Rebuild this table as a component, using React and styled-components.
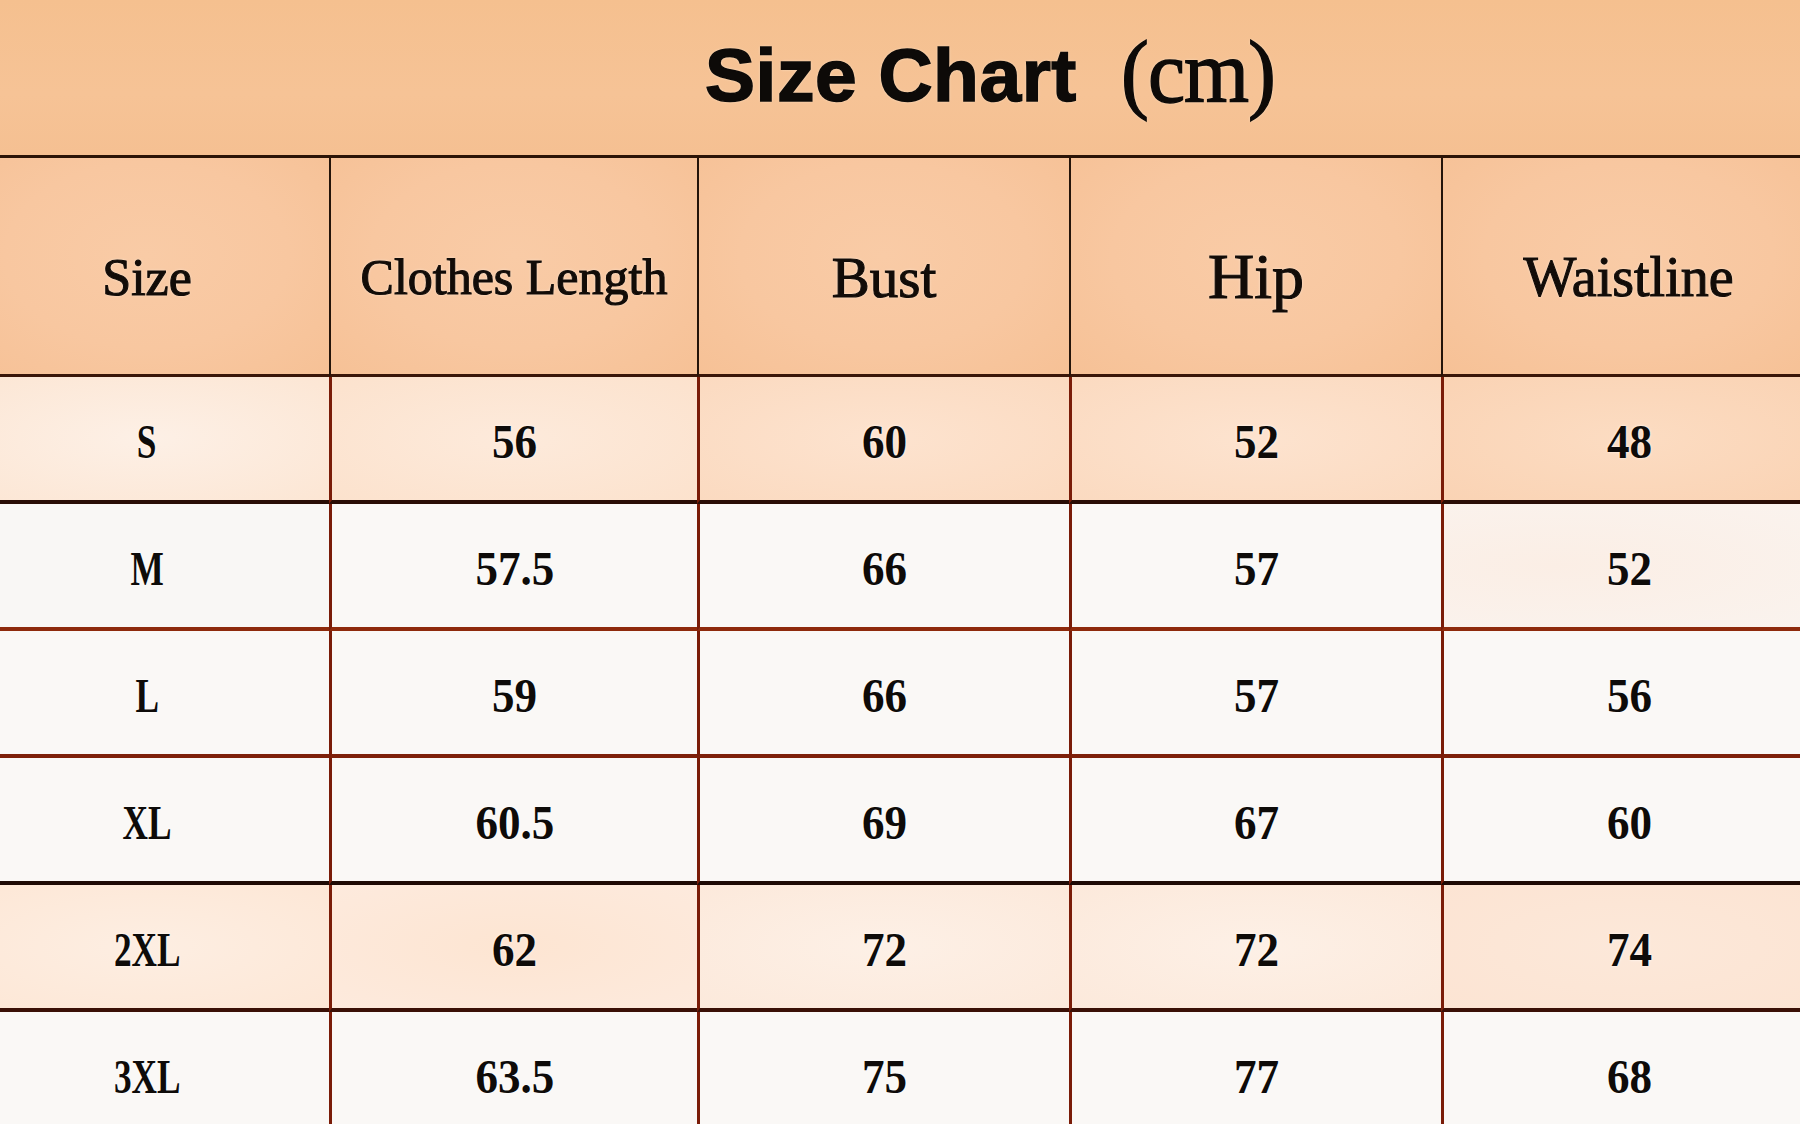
import styled, { createGlobalStyle } from "styled-components";

const GlobalStyle = createGlobalStyle`
  html, body {
    margin: 0;
    padding: 0;
    background: #faf8f6;
    overflow: hidden;
  }
  body {
    font-family: "Liberation Serif", serif;
    color: #111;
  }
`;

const Page = styled.div`
  width: 1800px;
  height: 1124px;
  overflow: hidden;
`;

const TitleBand = styled.div`
  height: 158px;
  box-sizing: border-box;
  border-bottom: 3px solid #2b1407;
  background: linear-gradient(180deg, #f5c08f 0%, #f6c396 60%, #f5c092 100%);
  display: flex;
  align-items: center;
  justify-content: center;
  padding-left: 188px;
  padding-bottom: 6px;
`;

const TitleText = styled.h1`
  margin: 0;
  font-family: "Liberation Sans", Arial, sans-serif;
  font-weight: 700;
  font-size: 75px;
  letter-spacing: 0.5px;
  color: #0d0a08;
  -webkit-text-stroke: 1.5px #0d0a08;
  text-shadow: 0 0 3px rgba(255, 245, 230, 0.9);
  display: flex;
  align-items: center;
`;

const Unit = styled.span`
  display: inline-block;
  margin-left: 44px;
  font-family: "Liberation Serif", serif;
  font-weight: 400;
  font-size: 88px;
  letter-spacing: -1px;
  -webkit-text-stroke: 1.4px #0d0a08;
  transform: scaleX(0.95);
  transform-origin: left center;
  margin-top: -4px;
`;

const Grid = styled.div`
  display: grid;
  grid-template-columns: 364px 368px 372px 372px 373px;
  margin-left: -35px;
`;

const HeadCell = styled.div`
  height: 219px;
  padding-top: 22px;
  box-sizing: border-box;
  border-bottom: 3px solid #3a1608;
  border-left: ${(p) => (p.$first ? "none" : "2px solid #24140a")};
  background: radial-gradient(ellipse at 50% 45%, #f9cba6 0%, #f8c7a0 55%, #f6c196 100%);
  display: flex;
  align-items: center;
  justify-content: center;
  font-family: "Liberation Serif", serif;
  font-size: ${(p) => p.$size}px;
  color: #120c08;
  -webkit-text-stroke: 1.1px #120c08;
  text-shadow: 0 0 3px rgba(255, 245, 235, 0.9);
  white-space: nowrap;
`;

const Cell = styled.div`
  height: 127px;
  padding-top: 6px;
  box-sizing: border-box;
  border-bottom: 4px solid ${(p) => p.$line};
  border-left: ${(p) => (p.$first ? "none" : "3px solid #7a1c08")};
  background: ${(p) => p.$bg};
  display: flex;
  align-items: center;
  justify-content: center;
  font-family: "Liberation Serif", serif;
  font-weight: 700;
  font-size: 49px;
  color: #0e0b09;
  text-shadow: 0 0 3px rgba(255, 255, 255, 0.9);
`;

const Label = styled.span`
  display: inline-block;
  transform: scaleX(${(p) => (p.$narrow ? 0.72 : 0.92)});
`;

const headers = [
  { text: "Size", size: 52 },
  { text: "Clothes Length", size: 50 },
  { text: "Bust", size: 57 },
  { text: "Hip", size: 64 },
  { text: "Waistline", size: 56 },
];

const plain = ["#faf8f6", "#faf8f6", "#faf8f6", "#faf8f6", "#faf8f6"];

const rows = [
  {
    values: ["S", "56", "60", "52", "48"],
    bg: [
      "radial-gradient(ellipse at 50% 50%, #fdf0e6 0%, #fce6d4 100%)",
      "radial-gradient(ellipse at 50% 50%, #fdeadb 0%, #fce2cd 100%)",
      "radial-gradient(ellipse at 50% 50%, #fde3cf 0%, #fbdac0 100%)",
      "radial-gradient(ellipse at 50% 50%, #fde3cf 0%, #fbdac0 100%)",
      "radial-gradient(ellipse at 50% 50%, #fcdcc2 0%, #fad3b4 100%)",
    ],
    line: "#2a0d05",
  },
  {
    values: ["M", "57.5", "66", "57", "52"],
    bg: ["#f9f7f5", "#faf8f6", "#faf8f6", "#faf8f6", "radial-gradient(ellipse at 30% 50%, #fbeee5 0%, #faf3ee 100%)"],
    line: "#8e2a0c",
  },
  { values: ["L", "59", "66", "57", "56"], bg: plain, line: "#7e200a" },
  { values: ["XL", "60.5", "69", "67", "60"], bg: plain, line: "#1e0a05" },
  {
    values: ["2XL", "62", "72", "72", "74"],
    bg: [
      "radial-gradient(ellipse at 50% 50%, #fdeee2 0%, #fde7d6 100%)",
      "radial-gradient(ellipse at 50% 50%, #fde5d2 0%, #fdeadd 100%)",
      "radial-gradient(ellipse at 50% 50%, #fdf0e6 0%, #fce9db 100%)",
      "radial-gradient(ellipse at 50% 50%, #fdf0e6 0%, #fce9db 100%)",
      "radial-gradient(ellipse at 50% 50%, #fce8d9 0%, #fce4d3 100%)",
    ],
    line: "#3a1006",
  },
  { values: ["3XL", "63.5", "75", "77", "68"], bg: plain, line: "#7e200a" },
];

export default function App() {
  return (
    <Page>
      <GlobalStyle />
      <TitleBand>
        <TitleText>
          Size Chart
          <Unit>(cm)</Unit>
        </TitleText>
      </TitleBand>

      <Grid>
        {headers.map((h, i) => (
          <HeadCell key={h.text} $first={i === 0} $size={h.size}>
            {h.text}
          </HeadCell>
        ))}

        {rows.map((row) =>
          row.values.map((v, i) => (
            <Cell
              key={`${row.values[0]}-${i}`}
              $first={i === 0}
              $bg={row.bg[i]}
              $line={row.line}
            >
              <Label $narrow={i === 0}>{v}</Label>
            </Cell>
          ))
        )}
      </Grid>
    </Page>
  );
}
